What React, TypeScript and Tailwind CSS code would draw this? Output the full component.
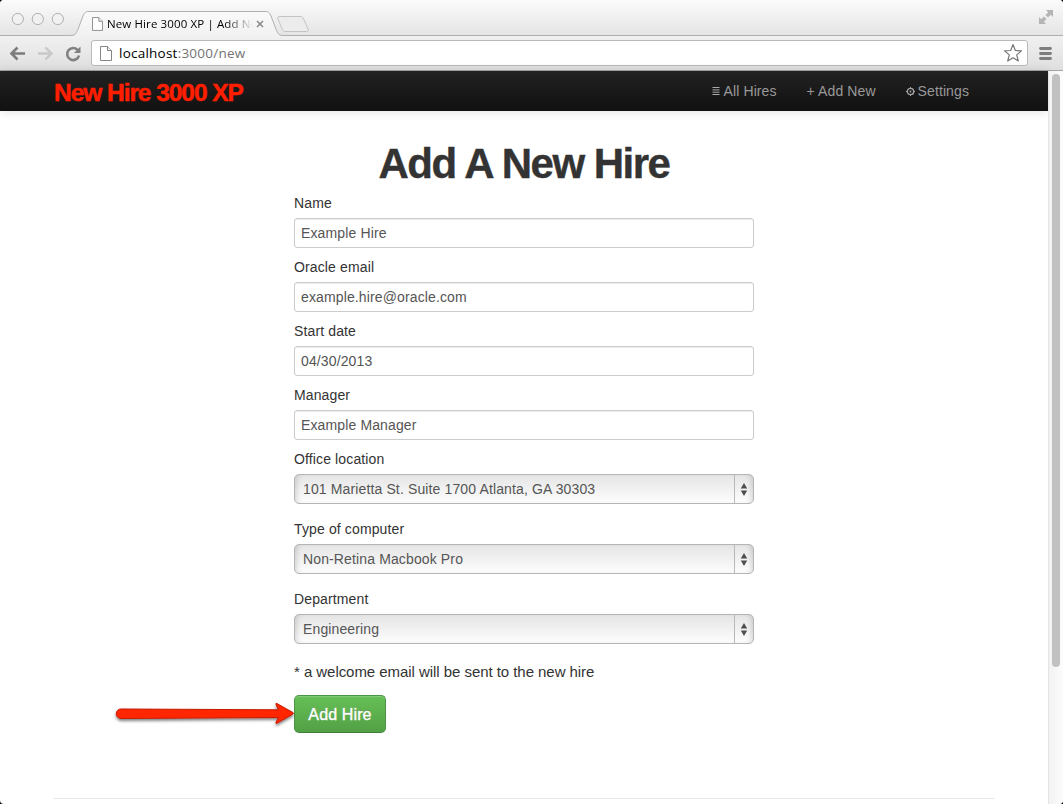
import React from "react";

function PageIcon({ className }: { className: string }) {
  return (
    <svg viewBox="0 0 12 15" className={className} fill="#fff" stroke="#858585" strokeWidth="1">
      <path d="M.5 .5H7.5L11.5 4.5V14.5H.5Z" />
      <path d="M7.5 .5V4.5H11.5" fill="#eee" />
    </svg>
  );
}

function TitleBar() {
  return (
    <div className="relative h-9 w-full bg-linear-to-b from-[#fbfbfb] to-[#e4e4e4]">
      <svg className="absolute inset-0 h-9 w-full" viewBox="0 0 1063 36" fill="none">
        <defs>
          <linearGradient id="tab" x1="0" y1="0" x2="0" y2="1">
            <stop offset="0" stopColor="#fafafa" />
            <stop offset="1" stopColor="#f1f1f1" />
          </linearGradient>
        </defs>
        <path d="M0 35.5H1063" stroke="#b0b0b0" />
        <path
          d="M70 35.5C75 35.5 76 34 77.500 30.500L83 16C84.500 12.500 85.500 11.500 89 11.500H265C268.500 11.500 269.500 12.500 271 16L276.500 30.500C278 34 279 35.500 284 35.500V36H70Z"
          fill="url(#tab)"
        />
        <path
          d="M70 35.5C75 35.5 76 34 77.500 30.500L83 16C84.500 12.500 85.500 11.500 89 11.500H265C268.500 11.500 269.500 12.500 271 16L276.500 30.500C278 34 279 35.500 284 35.500"
          stroke="#b0b0b0"
        />
        <path
          d="M280 16.5H300C302 16.5 303 17.500 303.700 19L308 29C308.800 31 308 31.500 306.500 31.500H286C284 31.500 283 31 282.300 29.500L278 19C277.300 17.300 278 16.500 280 16.500Z"
          fill="#ececec"
          stroke="#c4c4c4"
        />
        {[17.8, 37.8, 57.8].map((x) => (
          <circle key={x} cx={x} cy="19" r="5.600" fill="#f1f1f1" stroke="#b0b0b0" />
        ))}
        <g fill="#b4b4b4">
          <path d="M1046 10H1053V17L1050.800 14.800L1048 17.500L1045.500 15L1048.200 12.200Z" />
          <path d="M1039 17V24H1046L1043.800 21.800L1046.500 19L1044 16.500L1041.200 19.200Z" />
        </g>
        <path d="M257 21L263 27M263 21L257 27" stroke="#858585" strokeWidth="1.500" />
      </svg>
      <div className="relative flex h-9 items-center pt-3 pl-[92px]">
        <PageIcon className="h-[14px] w-[11px]" />
        <div className="ml-1 bg-linear-to-r from-black from-[118px] to-transparent to-[146px] bg-clip-text font-['Open_Sans',sans-serif] text-[11.5px] leading-4 tracking-[0.12px] whitespace-nowrap text-transparent">
          New Hire 3000 XP | Add Ne
        </div>
      </div>
    </div>
  );
}

function Toolbar() {
  return (
    <div className="flex h-[35px] items-center border-b border-[#a5a5a5] bg-linear-to-b from-[#f1f1f1] to-[#dfdfdf]">
      <svg className="h-[34px] w-[91px]" viewBox="0 0 91 34" fill="none">
        <path d="M25 17.500H12M17.500 11.500L11.500 17.500L17.500 23.500" stroke="#7c7c7c" strokeWidth="2.600" />
        <path d="M38 17.500H51M45.500 11.500L51.500 17.500L45.500 23.500" stroke="#c8c8c8" strokeWidth="2.400" />
        <path d="M78 14.500A6 6 0 1 0 79 19.500" stroke="#808080" strokeWidth="2.600" />
        <path d="M80.500 10.500V17H74Z" fill="#808080" />
      </svg>
      <div className="flex h-[26px] w-[937px] items-center rounded-[3px] border border-[#b9b9b9] bg-white pr-1 pl-2">
        <PageIcon className="h-[15px] w-3" />
        <div className="ml-[7px] flex-1 font-['Open_Sans',sans-serif] text-[13.5px] leading-5 tracking-[0.23px] text-[#737373]">
          <span className="text-black">localhost</span>:3000/new
        </div>
        <svg className="h-5 w-5" viewBox="0 0 20 20" fill="#fff" stroke="#777" strokeWidth="1.200" strokeLinejoin="round">
          <path d="M10 1.500L12.300 7.500L18.500 7.900L13.700 11.900L15.300 18L10 14.700L4.700 18L6.300 11.900L1.500 7.900L7.700 7.500Z" />
        </svg>
      </div>
      <svg className="ml-[11px] h-[13px] w-[13px]" viewBox="0 0 13 13" stroke="#7f7f7f" strokeWidth="2.800" strokeLinecap="round">
        <path d="M1.500 1.500H11.500M1.500 6.500H11.500M1.500 11.500H11.500" />
      </svg>
    </div>
  );
}

function Navbar() {
  return (
    <nav className="flex h-10 shrink-0 items-center bg-linear-to-b from-[#222] to-[#111] pr-[79px] pl-[54px] shadow-[0_1px_10px_rgba(0,0,0,0.12)]">
      <a className="mt-[3px] text-[24.5px] leading-8 font-bold tracking-[-1.05px] whitespace-nowrap text-[#ff1f00] [-webkit-text-stroke:0.5px_#ff1f00]">
        New Hire 3000 XP
      </a>
      <div className="ml-auto flex gap-[30px] text-sm leading-5 tracking-[0.1px] whitespace-nowrap text-[#999]">
        <a className="flex items-center">
          <svg className="mr-1 h-2 w-2" viewBox="0 0 8 8" stroke="#aaa">
            <path d="M.5 .5H7.500M.5 2.900H7.500M.5 5.200H7.500M.5 7.500H7.500" />
          </svg>
          All Hires
        </a>
        <a>+ Add New</a>
        <a className="flex items-center">
          <svg className="mr-[3px] h-[9px] w-[9px]" viewBox="0 0 9 9" fill="none" stroke="#a3a3a3">
            <circle cx="4.500" cy="4.500" r="3.200" strokeWidth="1.300" />
            <circle cx="4.500" cy="4.500" r=".9" fill="#a3a3a3" stroke="none" />
            <path d="M4.500 0V1.500M4.500 7.500V9M0 4.500H1.500M7.500 4.500H9" />
          </svg>
          Settings
        </a>
      </div>
    </nav>
  );
}

function Field({ label, value }: { label: string; value: string }) {
  return (
    <div className="mb-[9px]">
      <div className="mb-[5px] h-5 leading-5 text-[#333]">{label}</div>
      <div className="h-[30px] rounded-[3px] border border-[#ccc] bg-white px-1.5 leading-7 text-[#555] shadow-[inset_0_1px_1px_rgba(0,0,0,0.075)]">
        {value}
      </div>
    </div>
  );
}

function Select({ label, value }: { label: string; value: string }) {
  return (
    <div className="mb-[15px]">
      <div className="mb-[5px] h-5 leading-5 text-[#333]">{label}</div>
      <div className="flex h-[30px] rounded-[5px] border border-[#b5b5b5] bg-linear-to-b from-[#e5e5e5] to-[#fdfdfd] pl-2 leading-7 text-[#555] shadow-[inset_5px_0_5px_-3px_rgba(0,0,0,0.13),inset_-5px_0_5px_-3px_rgba(0,0,0,0.13)]">
        <span className="flex-1">{value}</span>
        <span className="flex w-[19px] items-center border-l border-[#b9b9b9] pl-[5px]">
          <svg className="h-[13px] w-2" viewBox="0 0 8 13" fill="#4d4d4d">
            <path d="M4 0L7.200 5.500H.8ZM4 13L7.200 7.500H.8Z" />
          </svg>
        </span>
      </div>
    </div>
  );
}

function Arrow() {
  return (
    <svg className="absolute top-1 -left-[182px] h-[34px] w-[186px]" viewBox="0 0 186 34" fill="none">
      <defs>
        <filter id="soft" x="-5%" y="-20%" width="110%" height="150%">
          <feDropShadow dx="0" dy="2" stdDeviation="1.500" floodOpacity=".5" />
        </filter>
      </defs>
      <path
        d="M9 10L166.500 10.800L164 5.500Q163.500 3.800 165 4.600L181 13.600Q182 14.300 181 15L165 24.200Q163.500 25 164 23.300L166.500 18.500L9 19.500A4.750 4.750 0 0 1 9 10Z"
        fill="#ff2600"
        stroke="#c51c00"
        filter="url(#soft)"
      />
    </svg>
  );
}

export default function App() {
  return (
    <div className="h-[804px] w-[1063px] overflow-hidden bg-black font-['Liberation_Sans',Arial,sans-serif]">
      <div className="flex h-full flex-col overflow-hidden rounded-[4px] bg-white">
        <TitleBar />
        <Toolbar />
        <div className="flex min-h-0 flex-1">
          <div className="flex w-[1048px] flex-col">
            <Navbar />
            <main className="flex flex-1 flex-col">
              <h1 className="mt-[33px] h-10 text-center text-[42px] leading-10 font-bold tracking-[-1.5px] text-[#333] [-webkit-text-stroke:0.4px_#333]">
                Add A New Hire
              </h1>
              <form className="mt-[9px] ml-[294px] w-[460px] text-sm tracking-[0.13px]">
                <Field label="Name" value="Example Hire" />
                <Field label="Oracle email" value="example.hire@oracle.com" />
                <Field label="Start date" value="04/30/2013" />
                <Field label="Manager" value="Example Manager" />
                <Select label="Office location" value="101 Marietta St. Suite 1700 Atlanta, GA 30303" />
                <Select label="Type of computer" value="Non-Retina Macbook Pro" />
                <Select label="Department" value="Engineering" />
                <p className="mt-[18px] mb-[13px] h-5 text-[15px] leading-5 tracking-[-0.05px] text-[#333]">
                  * a welcome email will be sent to the new hire
                </p>
                <div className="relative w-[92px]">
                  <button
                    type="button"
                    className="h-[38px] w-[92px] rounded-[5px] border border-[#4a9347] border-b-[#3f7f3c] bg-linear-to-b from-[#66c056] to-[#53a045] pt-0.5 text-base whitespace-nowrap text-white shadow-[inset_0_1px_0_rgba(255,255,255,0.2)] [-webkit-text-stroke:0.4px_white] [text-shadow:0_-1px_0_rgba(0,0,0,0.25)]"
                  >
                    Add Hire
                  </button>
                  <Arrow />
                </div>
              </form>
              <div className="mt-[65px] ml-[54px] h-px w-[940px] bg-[#e6e6e6]" />
            </main>
          </div>
          <div className="flex w-[15px] justify-center border-l border-[#e4e4e4] bg-linear-to-r from-[#f2f2f2] to-[#fcfcfc] pt-[3px]">
            <div className="h-[593px] w-2 rounded-full bg-[#c1c1c1]" />
          </div>
        </div>
      </div>
    </div>
  );
}
